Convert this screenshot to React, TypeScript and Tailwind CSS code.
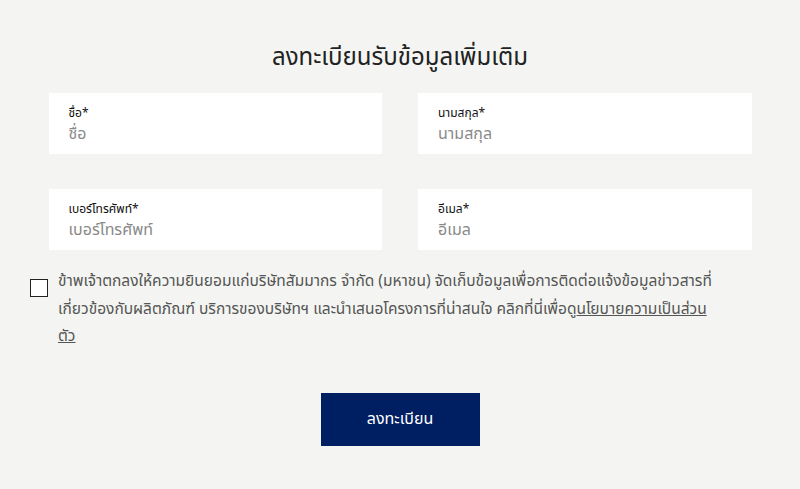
import React, { useState } from 'react';

const fields = [
  { label: 'ชื่อ*', placeholder: 'ชื่อ' },
  { label: 'นามสกุล*', placeholder: 'นามสกุล' },
  { label: 'เบอร์โทรศัพท์*', placeholder: 'เบอร์โทรศัพท์' },
  { label: 'อีเมล*', placeholder: 'อีเมล' },
];

const App: React.FC = () => {
  const [agree, setAgree] = useState(false);

  return (
    <div className="min-h-[489px] w-full bg-[#f4f5f2] font-['Noto_Sans_Thai','Noto_Sans',sans-serif] text-[#1b1b1b]">
      <div className="pt-[40px] flex flex-col items-center">
        <h1 className="text-[24px] leading-[36px] font-normal text-[#222]">ลงทะเบียนรับข้อมูลเพิ่มเติม</h1>

        <div className="mt-[17px] w-[703px] grid grid-cols-2 gap-x-[36px] gap-y-[35px]">
          {fields.map((f) => (
            <label key={f.label} className="h-[61px] bg-white pl-[20px] pt-[12px] flex flex-col">
              <span className="text-[12px] leading-[16px] text-[#111]">{f.label}</span>
              <input
                type="text"
                placeholder={f.placeholder}
                className="mt-[2px] text-[16px] leading-[22px] text-[#333] placeholder:text-[#8a8a8a] bg-transparent outline-none font-['Noto_Sans_Thai','Noto_Sans',sans-serif]"
              />
            </label>
          ))}
        </div>

        <div className="mt-[18px] w-[740px] flex gap-[10px]">
          <button
            onClick={() => setAgree(!agree)}
            className="mt-[11px] w-[18px] h-[18px] shrink-0 border border-[#222] bg-white"
          >
            {agree && <span className="block w-full h-full bg-[#001e62]" />}
          </button>
          <p className="w-[706px] text-[15.5px] leading-[27.5px] text-[#555]">
            ข้าพเจ้าตกลงให้ความยินยอมแก่บริษัทสัมมากร จำกัด (มหาชน) จัดเก็บข้อมูลเพื่อการติดต่อแจ้งข้อมูลข่าวสารที่เกี่ยวข้องกับผลิตภัณฑ์ บริการของบริษัทฯ และนำเสนอโครงการที่น่าสนใจ คลิกที่นี่เพื่อดู<a className="underline">นโยบายความเป็นส่วน<br />ตัว</a>
          </p>
        </div>

        <button className="mt-[42px] w-[159px] h-[53px] bg-[#001e62] text-white text-[16px]">ลงทะเบียน</button>
      </div>
    </div>
  );
};

export default App;
